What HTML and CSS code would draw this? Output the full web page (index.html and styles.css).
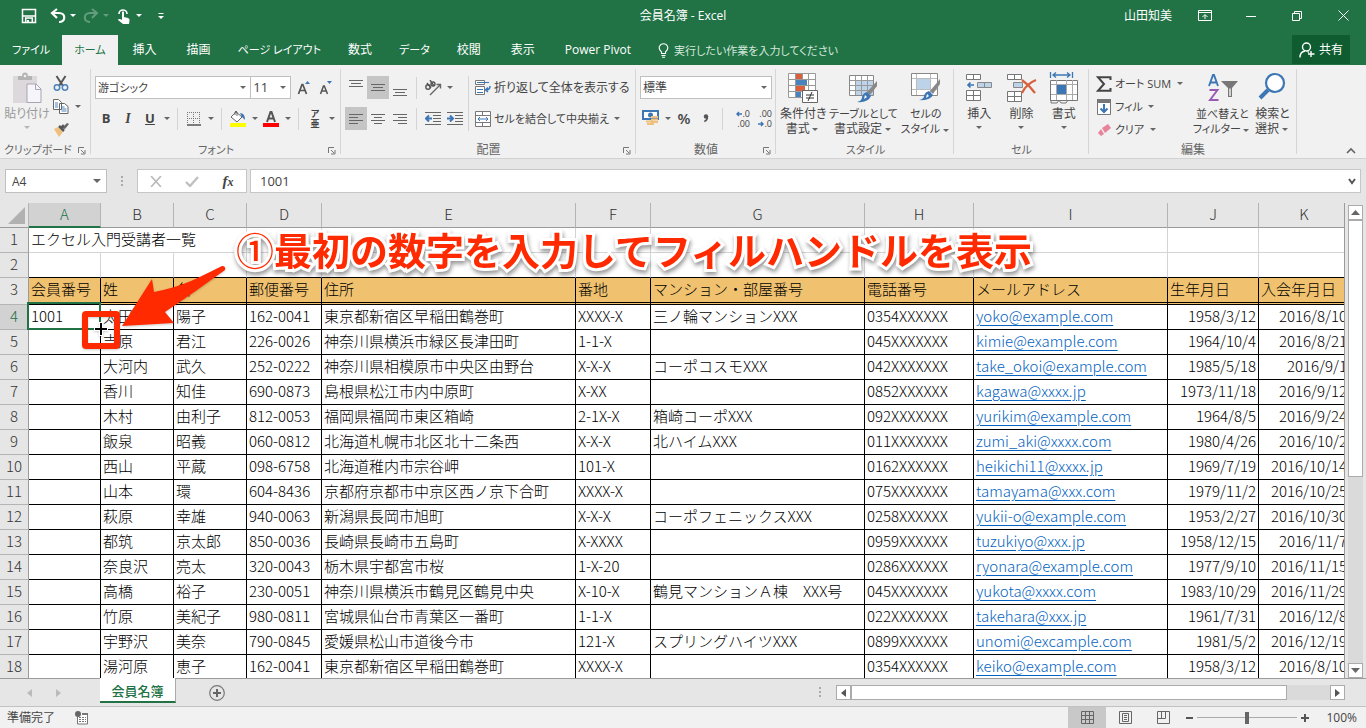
FILE: index.html
```html
<!DOCTYPE html>
<html lang="ja">
  <head>
    <meta charset="UTF-8" />
    <meta name="viewport" content="width=device-width, initial-scale=1.0" />
    <title>会員名簿 - Excel</title>
    <link rel="stylesheet" href="styles.css">
  </head>
  <body>
    <header class="titlebar">
      <div class="quick-access">
        <button class="qa" aria-label="上書き保存"><svg width="16" height="16" viewBox="0 0 16 16"><path d="M1.500 1.500h13v13h-13z" fill="none" stroke="#fff" stroke-width="1.500"/><path d="M2 8h12M4.700 14v-4h6.600v4" fill="none" stroke="#fff" stroke-width="1.500"/><path d="M6 12h2v3H6z" fill="#fff"/></svg></button>
        <button class="qa" aria-label="元に戻す"><svg width="16" height="16" viewBox="0 0 16 16"><path d="M2 5h7c7 0 7 9 0 9M7 1L2 5l5 5" fill="none" stroke="#fff" stroke-width="2.200"/></svg></button>
        <i class="caret light"></i>
        <button class="qa faded" aria-label="やり直し"><svg width="16" height="16" viewBox="0 0 16 16"><path d="M14 5H7c-7 0-7 9 0 9M9 1l5 4-5 5" fill="none" stroke="#fff" stroke-width="2"/></svg></button>
        <i class="caret light faded"></i>
        <button class="qa" aria-label="タッチ/マウス モード"><svg width="16" height="18" viewBox="0 0 16 18"><path d="M3 7a4 4 0 1 1 8 0" fill="none" stroke="#fff" stroke-width="1.600"/><path d="M6 5q1-1.500 2 0v5l4 1q2 .5 1.500 2.500L13 17H7l-5-4q0-1.500 2-1l2 1z" fill="#fff"/></svg></button>
        <i class="caret light"></i>
        <button class="qa" aria-label="クイック アクセスのカスタマイズ"><svg width="8" height="8" viewBox="0 0 8 8"><path d="M1.500 1.500h5" stroke="#fff"/><path d="M1 4h6L4 7z" fill="#fff"/></svg></button>
      </div>
      <h1>会員名簿 - Excel</h1>
      <div class="window-controls">
        <span>山田知美</span>
        <button aria-label="リボンの表示オプション"><svg width="14" height="12" viewBox="0 0 14 12"><path d="M.5.500h13v10H.5zM.5 2.500h13M7 9V5M4.500 7L7 4.500 9.500 7" fill="none" stroke="#fff"/></svg></button>
        <button aria-label="最小化"><svg width="10" height="10" viewBox="0 0 10 10"><path d="M0 5.500h10" stroke="#fff"/></svg></button>
        <button aria-label="元に戻す (縮小)"><svg width="10" height="10" viewBox="0 0 10 10"><path d="M.5 2.500h7v7h-7zM2.500 2.500v-2h7v7h-2" fill="none" stroke="#fff"/></svg></button>
        <button aria-label="閉じる"><svg width="11" height="11" viewBox="0 0 11 11"><path d="M.5.500l10 10M10.500.5l-10 10" stroke="#fff"/></svg></button>
      </div>
    </header>

    <nav class="tabs">
      <a href="#file" class="kana">ファイル</a>
      <a href="#home" class="kana active">ホーム</a>
      <a href="#insert">挿入</a>
      <a href="#draw">描画</a>
      <a href="#layout" class="kana">ページ レイアウト</a>
      <a href="#formulas">数式</a>
      <a href="#data" class="kana">データ</a>
      <a href="#review">校閲</a>
      <a href="#view">表示</a>
      <a href="#pivot">Power Pivot</a>
      <a href="#tell" class="kana tell-me"><svg width="11" height="15" viewBox="0 0 11 15"><path d="M3.500 10.500V9C-1 5 2 .7 5.500.7S12 5 7.500 9v1.500zM3.500 12.500h4M4 14.300h3" fill="none" stroke="#fff" stroke-width="1.100"/></svg>実行したい作業を入力してください</a>
      <button class="share"><svg width="16" height="16" viewBox="0 0 16 16"><circle cx="7.500" cy="5" r="4" fill="none" stroke="#fff" stroke-width="1.400"/><path d="M1 15.500c0-4 2-6 5-6.500M8.500 9.500l1.500.8M12 9v6M9 12h6.500" fill="none" stroke="#fff" stroke-width="1.400"/></svg>共有</button>
    </nav>

    <section class="ribbon">
      <div class="group clipboard">
        <div class="group-body">
          <button class="big paste">
            <svg width="30" height="32" viewBox="0 0 30 32"><path d="M1 4h24v27H1z" fill="#dcd8dc"/><path d="M6 4h4q0-3.500 3-3.500T16 4h4v4H6z" fill="#b4b4b4"/><circle cx="13" cy="4" r="1.300" fill="#f1f1f1"/><path d="M15 12h9l5 5v13.500H15z" fill="#f6f6fa" stroke="#aaa4b4"/><path d="M23.500 12v5.500H29" fill="none" stroke="#aaa4b4"/></svg>
            <span>貼り付け</span><i class="caret"></i>
          </button>
          <div class="stack">
            <button class="tool" aria-label="切り取り"><svg width="16" height="17" viewBox="0 0 16 17"><path d="M3.500 1l6.500 10M12.500 1L6 11" stroke="#555" stroke-width="2"/><circle cx="4" cy="12.500" r="2.700" fill="none" stroke="#4a82bd" stroke-width="1.500"/><circle cx="12" cy="12.500" r="2.700" fill="none" stroke="#4a82bd" stroke-width="1.500"/></svg></button>
            <div class="row"><button class="tool" aria-label="コピー"><svg width="16" height="15" viewBox="0 0 16 15"><path d="M.5.500h5l3 3V10.500h-8zM6.500 4.500h5l3.500 3v7H6.500z" fill="#fff" stroke="#666"/><path d="M2 4h3M2 6h3M2 8h3M8.500 8h3M8.500 10h5M8.500 12h5" stroke="#4a82bd"/></svg></button><i class="caret"></i></div>
            <button class="tool" aria-label="書式のコピー"><svg width="17" height="15" viewBox="0 0 17 15"><path d="M1 7l4-2 5 5-4 5z" fill="#eec07c"/><path d="M6 4l5 5M8 6l2-2 2 2" stroke="#555" stroke-width="2.500"/><path d="M10 5l4-4 2 1-4 5z" fill="#666"/></svg></button>
          </div>
        </div>
        <div class="group-label kana">クリップボード<svg class="launcher" width="8" height="8" viewBox="0 0 8 8"><path d="M.5 6V.5H6M3 3l3 3M7 3v4H3" fill="none" stroke="#777"/></svg></div>
      </div>

      <div class="group font">
        <div class="group-body column">
          <div class="row">
            <label class="combo font-name kana"><select aria-label="フォント"><option>游ゴシック</option></select></label>
            <label class="combo font-size"><select aria-label="フォント サイズ"><option>11</option></select></label>
            <button class="tool" aria-label="フォント サイズの拡大"><svg width="14" height="16" viewBox="0 0 14 16"><path d="M1.500 14L5 4.500h.8L9.500 14M3 10.500h5" fill="none" stroke="#555" stroke-width="1.700"/><path d="M8 4l2.500-3L13 4z" fill="#3c76b5"/></svg></button>
            <button class="tool" aria-label="フォント サイズの縮小"><svg width="14" height="16" viewBox="0 0 14 16"><path d="M1.500 14L4.500 6h.8L8.500 14M3 11h4.500" fill="none" stroke="#555" stroke-width="1.500"/><path d="M8 1h5l-2.500 3z" fill="#3c76b5"/></svg></button>
          </div>
          <div class="row">
            <button class="tool"><b>B</b></button>
            <button class="tool"><em>I</em></button>
            <button class="tool"><u>U</u></button><i class="caret"></i>
            <span class="sep"></span>
            <button class="tool" aria-label="罫線"><svg width="14" height="14" viewBox="0 0 14 14"><path d="M0 .5h14M0 6.500h14M.5 0v12M6.500 0v12M12.500 0v12" stroke="#777" stroke-dasharray="1 1"/><path d="M0 13h14" stroke="#555" stroke-width="1.500"/></svg></button><i class="caret"></i>
            <span class="sep"></span>
            <button class="tool" aria-label="塗りつぶしの色"><svg width="18" height="17" viewBox="0 0 18 17"><path d="M2 7l5-5 6 5-5 5z" fill="#fff" stroke="#666"/><path d="M6 5V2q1-2 2 0v4" fill="none" stroke="#666"/><path d="M11 3q5 0 5 7l-3-3z" fill="#3c76b5"/><path d="M1 13h16v4H1z" fill="#ff0"/></svg></button><i class="caret"></i>
            <button class="tool" aria-label="フォントの色"><svg width="16" height="17" viewBox="0 0 16 17"><path d="M4 12L7.500 2h1L12 12M5.500 8.500h5" fill="none" stroke="#555" stroke-width="2"/><path d="M0 13h16v4H0z" fill="#f00"/></svg></button><i class="caret"></i>
            <span class="sep"></span>
            <button class="tool ruby" aria-label="ふりがな"><span>ア</span><span>亜</span></button><i class="caret"></i>
          </div>
        </div>
        <div class="group-label kana">フォント<svg class="launcher" width="8" height="8" viewBox="0 0 8 8"><path d="M.5 6V.5H6M3 3l3 3M7 3v4H3" fill="none" stroke="#777"/></svg></div>
      </div>

      <div class="group align">
        <div class="group-body">
          <div class="stack wide">
            <div class="row">
              <button class="tool" aria-label="上揃え"><svg width="14" height="16" viewBox="0 0 14 16"><path d="M0 .5h14M2 3.500h10M0 6.500h14" stroke="#666"/></svg></button>
              <button class="tool on" aria-label="上下中央揃え"><svg width="14" height="16" viewBox="0 0 14 16"><path d="M0 4.500h14M2 7.500h10M0 10.500h14" stroke="#666"/></svg></button>
              <button class="tool" aria-label="下揃え"><svg width="14" height="16" viewBox="0 0 14 16"><path d="M0 9.500h14M2 12.500h10M0 15.500h14" stroke="#666"/></svg></button>
              <span class="sep"></span>
              <button class="tool" aria-label="方向"><svg width="18" height="16" viewBox="0 0 18 16"><path d="M6 15L16 5M12.500 4.500H16.500V8.500" fill="none" stroke="#666" stroke-width="1.400"/><circle cx="4" cy="7" r="2.200" fill="none" stroke="#555" stroke-width="1.400"/><path d="M3 3l4 5" stroke="#555" stroke-width="1.400"/><circle cx="9" cy="4" r="2" fill="none" stroke="#555" stroke-width="1.400"/><path d="M6 0l4 6" stroke="#555" stroke-width="1.400"/></svg></button><i class="caret"></i>
            </div>
            <div class="row">
              <button class="tool on" aria-label="左揃え"><svg width="14" height="12" viewBox="0 0 14 12"><path d="M0 1.500h14M0 4.500h9M0 7.500h14M0 10.500h9" stroke="#666"/></svg></button>
              <button class="tool" aria-label="中央揃え"><svg width="14" height="12" viewBox="0 0 14 12"><path d="M0 1.500h14M3 4.500h8M0 7.500h14M3 10.500h8" stroke="#666"/></svg></button>
              <button class="tool" aria-label="右揃え"><svg width="14" height="12" viewBox="0 0 14 12"><path d="M0 1.500h14M5 4.500h9M0 7.500h14M5 10.500h9" stroke="#666"/></svg></button>
              <span class="sep"></span>
              <button class="tool" aria-label="インデントを減らす"><svg width="16" height="14" viewBox="0 0 16 14"><path d="M0 .5h16M8 3.500h8M8 6.500h8M8 9.500h8M0 12.500h16" stroke="#666"/><path d="M7 6.500H2M4 3.500l-3 3 3 3" fill="none" stroke="#3c76b5" stroke-width="2"/></svg></button>
              <button class="tool" aria-label="インデントを増やす"><svg width="16" height="14" viewBox="0 0 16 14"><path d="M0 .5h16M8 3.500h8M8 6.500h8M8 9.500h8M0 12.500h16" stroke="#666"/><path d="M0 6.500h5M3 3.500l3 3-3 3" fill="none" stroke="#3c76b5" stroke-width="2"/></svg></button>
            </div>
          </div>
          <span class="sep tall"></span>
          <div class="stack wide">
            <button class="text-tool"><svg width="16" height="16" viewBox="0 0 16 16"><path d="M.5.500h9v4h-9zM.5 6.500h9v8h-9z" fill="#fff" stroke="#777"/><path d="M2 2.500h12M2 9.500h6M2 12.500h6" stroke="#3c76b5"/><path d="M15 6q0 4-4 4M13 7.500L10.500 10l2.500 2" fill="none" stroke="#3c76b5" stroke-width="1.500"/></svg>折り返して全体を表示する</button>
            <button class="text-tool kana"><svg width="16" height="16" viewBox="0 0 16 16"><path d="M.5.500h15v15H.5zM.5 4.500h15M.5 11.500h15M7.500.5v4M7.500 11.500v4" fill="#fff" stroke="#777"/><path d="M3 8h10M5 6L3 8l2 2M11 6l2 2-2 2" fill="none" stroke="#3c76b5"/></svg>セルを結合して中央揃え<i class="caret"></i></button>
          </div>
        </div>
        <div class="group-label">配置<svg class="launcher" width="8" height="8" viewBox="0 0 8 8"><path d="M.5 6V.5H6M3 3l3 3M7 3v4H3" fill="none" stroke="#777"/></svg></div>
      </div>

      <div class="group number">
        <div class="group-body column">
          <label class="combo"><select aria-label="数値の書式"><option>標準</option></select></label>
          <div class="row">
            <button class="tool" aria-label="通貨表示形式"><svg width="18" height="17" viewBox="0 0 18 17"><path d="M1 1h15v8H1z" fill="#fff" stroke="#3c76b5" stroke-width="2"/><circle cx="8.500" cy="5" r="2.500" fill="#3c76b5"/><path d="M9 7h7M9 9.500h7M9 12h7M4 11.500h7M5 14h7" stroke="#eec07c" stroke-width="2"/></svg></button><i class="caret"></i>
            <button class="tool percent">%</button>
            <button class="tool" aria-label="桁区切りスタイル"><svg width="6" height="10" viewBox="0 0 6 10"><circle cx="3" cy="2.500" r="2.200" fill="#555"/><path d="M4.300 2.500q.4 3.500-3 5" fill="none" stroke="#555" stroke-width="1.600"/></svg></button>
            <span class="sep"></span>
            <button class="tool decimals"><span><svg width="6" height="6" viewBox="0 0 6 6"><path d="M6 3H1M3 1L1 3l2 2" fill="none" stroke="#3c76b5" stroke-width="1.500"/></svg>.0</span><span>.00</span></button>
            <button class="tool decimals"><span>.00</span><span><svg width="6" height="6" viewBox="0 0 6 6"><path d="M0 3h5M3 1l2 2-2 2" fill="none" stroke="#3c76b5" stroke-width="1.500"/></svg>.0</span></button>
          </div>
        </div>
        <div class="group-label">数値<svg class="launcher" width="8" height="8" viewBox="0 0 8 8"><path d="M.5 6V.5H6M3 3l3 3M7 3v4H3" fill="none" stroke="#777"/></svg></div>
      </div>

      <div class="group styles">
        <div class="group-body">
          <button class="big">
            <svg width="32" height="32" viewBox="0 0 32 32"><path d="M1.500 1.500h27v24h-27zM1.500 7.500h27M1.500 13.500h27M1.500 19.500h27M8.500 1.500v24M15.500 1.500v24M21.500 1.500v24" fill="#fff" stroke="#999"/><path d="M9 2h6v5H9zM9 14h9v5H9z" fill="#d8603c"/><path d="M9 8h11v5H9zM9 20h5v5H9z" fill="#4a82bd"/><path d="M15.500 18.500h15v12h-15z" fill="#fff" stroke="#666"/><path d="M19 23h8M19 26h8M25 20l-4 9" stroke="#333"/></svg>
            <span>条件付き</span><span>書式<i class="caret"></i></span>
          </button>
          <button class="big">
            <svg width="32" height="32" viewBox="0 0 32 32"><path d="M1.500 3.500h24v20h-24z" fill="#fff" stroke="#888"/><path d="M8 9h17v14H8z" fill="#bdd3ea"/><path d="M2 8.500h23M2 13.500h23M2 18.500h23M7.500 4v19M13.500 4v19M19.500 4v19" stroke="#999"/><path d="M29 9v5l-7 9-3-3z" fill="#888"/><path d="M19 20l4 4q-3 7-14 6 5-1 5-5 1-4 5-5z" fill="#3c76b5"/><path d="M17 23l2 2-3 2z" fill="#fff"/></svg>
            <span class="kana">テーブルとして</span><span>書式設定<i class="caret"></i></span>
          </button>
          <button class="big">
            <svg width="32" height="32" viewBox="0 0 32 32"><path d="M1.500 1.500h26v22h-26z" fill="#fff" stroke="#888"/><path d="M2 6.500h25M2 17.500h25M6.500 2v21M20.500 2v21" stroke="#bbb"/><path d="M7 7h13v10H7z" fill="#bdd3ea"/><path d="M30 7v5l-7 10-3-3z" fill="#888"/><path d="M19 19l4 4q-3 6-14 5 5-1 5-4 1-4 5-5z" fill="#3c76b5"/><path d="M17 22l2 2-3 2z" fill="#fff"/></svg>
            <span class="kana">セルの</span><span class="kana">スタイル<i class="caret"></i></span>
          </button>
        </div>
        <div class="group-label kana">スタイル</div>
      </div>

      <div class="group cells">
        <div class="group-body">
          <button class="big">
            <svg width="28" height="32" viewBox="0 0 28 32"><path d="M1.500 2.500h14v5h-14zM8.500 2.500v5M1.500 18.500h14v10h-14zM8.500 18.500v10M1.500 23.500h14" fill="#fff" stroke="#777"/><path d="M12.500 10.500h14v5h-14zM19.500 10.500v5" fill="#bdd3ea" stroke="#888"/><path d="M9 13H3M5.500 10.500L3 13l2.500 2.500" fill="none" stroke="#3c76b5" stroke-width="1.700"/></svg>
            <span>挿入</span><i class="caret"></i>
          </button>
          <button class="big">
            <svg width="32" height="32" viewBox="0 0 32 32"><path d="M2.500 2.500h14v5h-14zM9.500 2.500v5M2.500 19.500h14v10h-14zM9.500 19.500v10M2.500 24.500h14" fill="#fff" stroke="#777"/><path d="M8.500 10.500h9v5h-9z" fill="#bdd3ea" stroke="#888"/><path d="M17 8q7 5 13 13M31 8Q21 12 17 21" fill="none" stroke="#d8603c" stroke-width="2.200"/></svg>
            <span>削除</span><i class="caret"></i>
          </button>
          <button class="big">
            <svg width="30" height="32" viewBox="0 0 30 32"><path d="M1.500 8.500h27v20h-27z" fill="#fff" stroke="#777"/><path d="M2 12.500h26M2 22.500h26M7.500 8v20M17.500 8v20M23.500 8v20" stroke="#aaa"/><path d="M8 13h9v9H8z" fill="#3c76b5"/><path d="M1.500 0v6M23.500 0v6M4 3h17M7 .5L4 3l3 2.500M18 .5L21 3l-3 2.500" fill="none" stroke="#3c76b5" stroke-width="1.300"/><path d="M2 28v3h6l2-3 2 3h5l2-3" fill="none" stroke="#777"/></svg>
            <span>書式</span><i class="caret"></i>
          </button>
        </div>
        <div class="group-label kana">セル</div>
      </div>

      <div class="group editing">
        <div class="group-body">
          <div class="stack edit-list kana">
            <button class="text-tool"><svg width="16" height="16" viewBox="0 0 16 16"><path d="M14.500 4V1.200H2L8 8l-6 6.800h12.500V12" fill="none" stroke="#444" stroke-width="2"/></svg>オート SUM<i class="caret"></i></button>
            <button class="text-tool"><svg width="16" height="16" viewBox="0 0 16 16"><path d="M1.500.5h13v15h-13z" fill="#fff" stroke="#777"/><path d="M1 0h14v4H1z" fill="#777"/><path d="M8 5v8M4.500 9.500L8 13l3.500-3.500" fill="none" stroke="#3c76b5" stroke-width="2"/></svg>フィル<i class="caret"></i></button>
            <button class="text-tool"><svg width="16" height="16" viewBox="0 0 16 16"><path d="M6 6l6-4 3 4-6 5z" fill="#e8839a"/><path d="M5 7l3 5-3 2-3-3z" fill="#e8839a"/></svg>クリア<i class="caret"></i></button>
          </div>
          <button class="big kana">
            <svg width="32" height="32" viewBox="0 0 32 32"><path d="M3 14L7 3h1l4 11M5 10.500h5" fill="none" stroke="#3c76b5" stroke-width="1.900"/><path d="M3.500 18h8L4 28h8.500" fill="none" stroke="#9859b5" stroke-width="1.900"/><path d="M15 9h17l-6 7v9h-4v-9z" fill="#777"/><path d="M24 16.500V24" stroke="#f1f1f1" stroke-width="1.500"/></svg>
            <span>並べ替えと</span><span>フィルター<i class="caret"></i></span>
          </button>
          <button class="big">
            <svg width="30" height="32" viewBox="0 0 30 32"><circle cx="18" cy="11" r="9" fill="#fff" stroke="#3c76b5" stroke-width="2.200"/><path d="M11 18l-8 8" stroke="#3c76b5" stroke-width="4"/></svg>
            <span>検索と</span><span>選択<i class="caret"></i></span>
          </button>
        </div>
        <div class="group-label">編集</div>
      </div>
      <button class="collapse" aria-label="リボンを折りたたむ"><svg width="10" height="7" viewBox="0 0 10 7"><path d="M1 6l4-4 4 4" fill="none" stroke="#666" stroke-width="1.700"/></svg></button>
    </section>

    <section class="formula-bar">
      <label class="combo name-box"><input type="text" value="A4" aria-label="名前ボックス" /></label>
      <span class="dots"></span>
      <div class="fx">
        <button aria-label="キャンセル"><svg width="12" height="11" viewBox="0 0 12 11"><path d="M1 0l10 11M11 0L1 11" stroke="#bbb" stroke-width="1.700"/></svg></button>
        <button aria-label="入力"><svg width="14" height="11" viewBox="0 0 14 11"><path d="M1 6l4 4 8-9" fill="none" stroke="#c0c0c0" stroke-width="2.400"/></svg></button>
        <button class="fx-button"><em>f<small>x</small></em></button>
      </div>
      <div class="formula">
        <input type="text" value="1001" aria-label="数式バー" />
        <svg width="8" height="7" viewBox="0 0 8 7"><path d="M1 1l3 4 3-4" fill="none" stroke="#555" stroke-width="2"/></svg>
      </div>
    </section>

    <main class="sheet">
      <div class="grid">
        <table>
          <colgroup><col class="w-head"><col class="w-number"><col class="w-name"><col class="w-name"><col class="w-zip"><col class="w-address"><col class="w-zip"><col class="w-building"><col class="w-phone"><col class="w-mail"><col class="w-date"><col class="w-date"></colgroup>
          <thead>
            <tr><th class="corner"><svg width="17" height="17" viewBox="0 0 17 17"><path d="M17 0v17H0z" fill="#b1b1b1"/></svg></th><th class="selected">A</th><th>B</th><th>C</th><th>D</th><th>E</th><th>F</th><th>G</th><th>H</th><th>I</th><th>J</th><th>K</th></tr>
          </thead>
          <tbody>
            <tr class="blank"><th>1</th><td colspan="3">エクセル入門受講者一覧</td><td></td><td></td><td></td><td></td><td></td><td></td><td></td><td></td></tr>
            <tr class="blank last"><th>2</th><td></td><td></td><td></td><td></td><td></td><td></td><td></td><td></td><td></td><td></td><td></td></tr>
            <tr class="heading"><th>3</th><td>会員番号</td><td>姓</td><td>名</td><td>郵便番号</td><td>住所</td><td>番地</td><td>マンション・部屋番号</td><td>電話番号</td><td>メールアドレス</td><td>生年月日</td><td>入会年月日</td></tr>
            <tr><th class="selected">4</th><td class="active-cell">1001</td><td>太田川</td><td>陽子</td><td>162-0041</td><td>東京都新宿区早稲田鶴巻町</td><td>XXXX-X</td><td>三ノ輪マンションXXX</td><td>0354XXXXXX</td><td><a href="mailto:yoko@example.com">yoko@example.com</a></td><td class="date">1958/3/12</td><td class="date">2016/8/10</td></tr>
            <tr><th>5</th><td></td><td>吉原</td><td>君江</td><td>226-0026</td><td>神奈川県横浜市緑区長津田町</td><td>1-1-X</td><td></td><td>045XXXXXXX</td><td><a href="mailto:kimie@example.com">kimie@example.com</a></td><td class="date">1964/10/4</td><td class="date">2016/8/21</td></tr>
            <tr><th>6</th><td></td><td>大河内</td><td>武久</td><td>252-0222</td><td>神奈川県相模原市中央区由野台</td><td>X-X-X</td><td>コーポコスモXXX</td><td>042XXXXXXX</td><td><a href="mailto:take_okoi@example.com">take_okoi@example.com</a></td><td class="date">1985/5/18</td><td class="date">2016/9/1</td></tr>
            <tr><th>7</th><td></td><td>香川</td><td>知佳</td><td>690-0873</td><td>島根県松江市内中原町</td><td>X-XX</td><td></td><td>0852XXXXXX</td><td><a href="mailto:kagawa@xxxx.jp">kagawa@xxxx.jp</a></td><td class="date">1973/11/18</td><td class="date">2016/9/12</td></tr>
            <tr><th>8</th><td></td><td>木村</td><td>由利子</td><td>812-0053</td><td>福岡県福岡市東区箱崎</td><td>2-1X-X</td><td>箱崎コーポXXX</td><td>092XXXXXXX</td><td><a href="mailto:yurikim@example.com">yurikim@example.com</a></td><td class="date">1964/8/5</td><td class="date">2016/9/24</td></tr>
            <tr><th>9</th><td></td><td>飯泉</td><td>昭義</td><td>060-0812</td><td>北海道札幌市北区北十二条西</td><td>X-X-X</td><td>北ハイムXXX</td><td>011XXXXXXX</td><td><a href="mailto:zumi_aki@xxxx.com">zumi_aki@xxxx.com</a></td><td class="date">1980/4/26</td><td class="date">2016/10/2</td></tr>
            <tr><th>10</th><td></td><td>西山</td><td>平蔵</td><td>098-6758</td><td>北海道稚内市宗谷岬</td><td>101-X</td><td></td><td>0162XXXXXX</td><td><a href="mailto:heikichi11@xxxx.jp">heikichi11@xxxx.jp</a></td><td class="date">1969/7/19</td><td class="date">2016/10/14</td></tr>
            <tr><th>11</th><td></td><td>山本</td><td>環</td><td>604-8436</td><td>京都府京都市中京区西ノ京下合町</td><td>XXXX-X</td><td></td><td>075XXXXXXX</td><td><a href="mailto:tamayama@xxx.com">tamayama@xxx.com</a></td><td class="date">1979/11/2</td><td class="date">2016/10/25</td></tr>
            <tr><th>12</th><td></td><td>萩原</td><td>幸雄</td><td>940-0063</td><td>新潟県長岡市旭町</td><td>X-X-X</td><td>コーポフェニックスXXX</td><td>0258XXXXXX</td><td><a href="mailto:yukii-o@example.com">yukii-o@example.com</a></td><td class="date">1953/2/27</td><td class="date">2016/10/30</td></tr>
            <tr><th>13</th><td></td><td>都筑</td><td>京太郎</td><td>850-0036</td><td>長崎県長崎市五島町</td><td>X-XXXX</td><td></td><td>0959XXXXXX</td><td><a href="mailto:tuzukiyo@xxx.jp">tuzukiyo@xxx.jp</a></td><td class="date">1958/12/15</td><td class="date">2016/11/7</td></tr>
            <tr><th>14</th><td></td><td>奈良沢</td><td>亮太</td><td>320-0043</td><td>栃木県宇都宮市桜</td><td>1-X-20</td><td></td><td>0286XXXXXX</td><td><a href="mailto:ryonara@example.com">ryonara@example.com</a></td><td class="date">1977/9/10</td><td class="date">2016/11/15</td></tr>
            <tr><th>15</th><td></td><td>高橋</td><td>裕子</td><td>230-0051</td><td>神奈川県横浜市鶴見区鶴見中央</td><td>X-10-X</td><td>鶴見マンションＡ棟　XXX号</td><td>045XXXXXXX</td><td><a href="mailto:yukota@xxxx.com">yukota@xxxx.com</a></td><td class="date">1983/10/29</td><td class="date">2016/11/29</td></tr>
            <tr><th>16</th><td></td><td>竹原</td><td>美紀子</td><td>980-0811</td><td>宮城県仙台市青葉区一番町</td><td>1-1-X</td><td></td><td>022XXXXXXX</td><td><a href="mailto:takehara@xxx.jp">takehara@xxx.jp</a></td><td class="date">1961/7/31</td><td class="date">2016/12/8</td></tr>
            <tr><th>17</th><td></td><td>宇野沢</td><td>美奈</td><td>790-0845</td><td>愛媛県松山市道後今市</td><td>121-X</td><td>スプリングハイツXXX</td><td>0899XXXXXX</td><td><a href="mailto:unomi@excample.com">unomi@excample.com</a></td><td class="date">1981/5/2</td><td class="date">2016/12/19</td></tr>
            <tr><th>18</th><td></td><td>湯河原</td><td>恵子</td><td>162-0041</td><td>東京都新宿区早稲田鶴巻町</td><td>XXXX-X</td><td></td><td>0354XXXXXX</td><td><a href="mailto:keiko@example.com">keiko@example.com</a></td><td class="date">1958/3/12</td><td class="date">2016/8/10</td></tr>
          </tbody>
        </table>
      </div>
      <div class="vscroll">
        <button aria-label="上へスクロール"><svg width="9" height="5" viewBox="0 0 9 5"><path d="M0 5l4.500-5L9 5z" fill="#666"/></svg></button>
        <div class="track"><div class="thumb"></div></div>
        <button aria-label="下へスクロール"><svg width="9" height="5" viewBox="0 0 9 5"><path d="M0 0h9L4.500 5z" fill="#666"/></svg></button>
      </div>

      <!-- callout over the cells -->
      <svg class="pointer" width="150" height="90" viewBox="0 0 150 90">
        <path d="M145 7q4 0 3 4-30 22-60 42l9 11L45 67 75 20l2 13C105 28 125 17 145 7z" fill="#ff2a00"/>
        <rect x="8" y="55" width="32" height="32" rx="1" fill="none" stroke="#ff2a00" stroke-width="6" stroke-linejoin="round"/>
        <path d="M24 63v14M17 70h14" stroke="#fff" stroke-width="4"/>
        <path d="M24 64v12M18 70h12" stroke="#000" stroke-width="2"/>
      </svg>
      <p class="callout"><span>①</span>最初の数字を入力してフィルハンドルを表示</p>
    </main>

    <div class="sheet-bar">
      <div class="sheet-nav">
        <button aria-label="前のシート"><svg width="5" height="8" viewBox="0 0 5 8"><path d="M5 0v8L0 4z" fill="#bbb"/></svg></button>
        <button aria-label="次のシート"><svg width="5" height="8" viewBox="0 0 5 8"><path d="M0 0v8l5-4z" fill="#bbb"/></svg></button>
      </div>
      <a href="#sheet1" class="sheet-tab">会員名簿</a>
      <button class="add-sheet" aria-label="新しいシート"><svg width="16" height="16" viewBox="0 0 16 16"><circle cx="8" cy="8" r="7.300" fill="none" stroke="#777" stroke-width="1.200"/><path d="M8 4v8M4 8h8" stroke="#666" stroke-width="2"/></svg></button>
      <span class="dots"></span>
      <div class="hscroll">
        <button aria-label="左へスクロール"><svg width="5" height="8" viewBox="0 0 5 8"><path d="M5 0v8L0 4z" fill="#555"/></svg></button>
        <div class="track"><div class="thumb"></div></div>
        <button aria-label="右へスクロール"><svg width="5" height="8" viewBox="0 0 5 8"><path d="M0 0v8l5-4z" fill="#555"/></svg></button>
      </div>
    </div>

    <footer class="status-bar">
      <span>準備完了</span>
      <svg width="14" height="14" viewBox="0 0 14 14"><path d="M2.500 4v9h10V3.500h-5" fill="#fff" stroke="#777"/><circle cx="3" cy="3" r="3" fill="#666"/><path d="M7 2h6v2H7z" fill="#777"/><path d="M4 6.500h7M4 8.500h7M4 10.500h7" stroke="#777" stroke-dasharray="2 1"/></svg>
      <div class="views">
        <button class="on" aria-label="標準"><svg width="13" height="13" viewBox="0 0 13 13"><path d="M.5.500h12v12H.5zM.5 4.500h12M.5 8.500h12M4.500.5v12M8.500.5v12" fill="none" stroke="#666"/></svg></button>
        <button aria-label="ページ レイアウト"><svg width="13" height="13" viewBox="0 0 13 13"><path d="M.5.500h12v12H.5zM3.500 2.500h6v8h-6zM5 4.500h3M5 6.500h3M5 8.500h3" fill="none" stroke="#666"/></svg></button>
        <button aria-label="改ページ プレビュー"><svg width="13" height="13" viewBox="0 0 13 13"><path d="M.5.500h12v12H.5zM4.500.5v7M8.500.5v7H.5" fill="none" stroke="#666"/></svg></button>
      </div>
      <button class="zoom-step" aria-label="縮小"><svg width="7" height="8" viewBox="0 0 7 8"><path d="M0 4h7" stroke="#555" stroke-width="2"/></svg></button>
      <input type="range" min="0" max="100" value="50" aria-label="ズーム" />
      <button class="zoom-step" aria-label="拡大"><svg width="8" height="8" viewBox="0 0 8 8"><path d="M0 4h8M4 0v8" stroke="#555" stroke-width="2"/></svg></button>
      <span class="zoom-value">100%</span>
    </footer>
  </body>
</html>
```
FILE: styles.css
```css
* {
  box-sizing: border-box;
}
body {
  margin: 0;
  height: 100vh;
  display: flex;
  flex-direction: column;
  overflow: hidden;
  background: #e6e6e6;
  color: #444;
  font: 12px/15px "Open Sans", "Noto Sans CJK JP", sans-serif;
  font-feature-settings: "palt";
}
button,
select,
input {
  font: inherit;
  font-feature-settings: inherit;
  color: inherit;
  margin: 0;
  padding: 0;
  border: 0;
  background: none;
  border-radius: 0;
}
a {
  color: inherit;
  text-decoration: none;
}
svg {
  display: block;
  flex: none;
}
.kana {
  font-size: 11px;
}

/* Title bar */
.titlebar {
  flex: 0 0 35px;
  display: grid;
  grid-template-columns: 1fr auto 1fr;
  align-items: center;
  padding-bottom: 4px;
  background: #217346;
  color: #fff;
}
.titlebar h1 {
  margin: 0;
  font-size: 12px;
  font-weight: 400;
}
.quick-access {
  display: flex;
  align-items: center;
  padding-left: 17px;
}
.qa {
  width: 24px;
  height: 24px;
  display: grid;
  place-items: center;
}
.quick-access .qa + .qa {
  margin-left: 5px;
}
.quick-access .caret {
  width: 9px;
  margin: 0 2px 0 -2px;
}
.quick-access .caret + .qa:last-child {
  margin-left: 4px;
}
.faded {
  opacity: 0.3;
}
.window-controls {
  display: flex;
  justify-content: flex-end;
  align-items: center;
}
.window-controls span {
  margin-right: 10px;
}
.window-controls button {
  width: 46px;
  height: 30px;
  display: grid;
  place-items: center;
}
.caret {
  flex: none;
  display: inline-grid;
  place-items: center;
  width: 11px;
  height: 8px;
  color: #666;
  vertical-align: middle;
}
.caret::before {
  content: "";
  border: 3px solid transparent;
  border-top-color: currentColor;
  border-bottom: 0;
}
.caret.light {
  color: #fff;
}

/* Ribbon tabs */
.tabs {
  flex: 0 0 30px;
  display: flex;
  background: #217346;
  color: #fff;
}
.tabs a {
  padding: 0 15px;
  line-height: 29px;
  white-space: nowrap;
}
.tabs a.kana {
  padding: 0 12px;
}
.tabs .active {
  background: #f1f1f1;
  color: #217346;
}
.tabs .tell-me {
  display: flex;
  align-items: center;
  gap: 5px;
  color: #d5e8dc;
}
.share {
  display: flex;
  align-items: center;
  gap: 4px;
  height: 29px;
  margin: 0 16px 0 auto;
  padding: 0 7px;
  background: #0e5c2f;
  color: #fff;
}

/* Ribbon */
.ribbon {
  flex: 0 0 94px;
  display: flex;
  padding: 4px 0;
  background: #f1f1f1;
  border-bottom: 1px solid #d2d2d2;
}
.group {
  display: flex;
  flex-direction: column;
  min-width: 0;
  border-right: 1px solid #d6d6d6;
  padding: 0 3px 0 4px;
}
.group-body {
  flex: 1;
  display: flex;
  padding-top: 7px;
}
.group-body.column {
  flex-direction: column;
  gap: 8px;
}
.group-label {
  position: relative;
  height: 10px;
  line-height: 12px;
  text-align: center;
  white-space: nowrap;
  color: #666;
}
.launcher {
  position: absolute;
  right: 1px;
  bottom: -1px;
}
.clipboard {
  flex: 0 0 91px;
}
.clipboard .group-label {
  text-align: left;
}
.font {
  flex: 0 0 250px;
}
.align {
  flex: 0 0 295px;
}
.number {
  flex: 0 0 140px;
}
.styles {
  flex: 0 0 178px;
}
.cells {
  flex: 0 0 135px;
}
.editing {
  flex: 0 0 208px;
}
.row {
  display: flex;
  align-items: center;
  height: 23px;
}
.stack {
  display: flex;
  flex-direction: column;
}
.stack.wide {
  gap: 8px;
}
.tool {
  flex: none;
  width: 22px;
  height: 23px;
  display: grid;
  place-items: center;
}
.tool.on {
  background: #c5c5c5;
}
.tool b,
.tool em,
.tool u {
  font-size: 13px;
  font-weight: 700;
}
.tool em {
  font-family: "Liberation Serif", serif;
  font-size: 14px;
}
.sep {
  flex: none;
  width: 1px;
  height: 22px;
  margin: 0 5px;
  background: #d4d4d4;
}
.sep.tall {
  height: 55px;
  margin: 0 6px 0 2px;
}
.combo {
  position: relative;
  display: block;
  height: 23px;
  background: #fff;
  border: 1px solid #c0c0c0;
}
.combo::after {
  content: "";
  position: absolute;
  right: 4px;
  top: 9px;
  border: 3px solid transparent;
  border-top-color: #666;
  border-bottom: 0;
}
.combo select,
.combo input {
  appearance: none;
  display: block;
  width: 100%;
  height: 100%;
  padding: 0 2px;
  outline: 0;
}
.font-name {
  width: 157px;
}
.font-size {
  width: 41px;
  margin-left: -1px;
  margin-right: 2px;
}
.font-size select {
  font-size: 13px;
}
.ruby {
  align-content: center;
  font-size: 9px;
  line-height: 10px;
  font-weight: 700;
}
.percent {
  font-size: 15px;
  font-weight: 600;
}
.decimals {
  align-content: center;
  justify-items: end;
  font-size: 9px;
  line-height: 10px;
}
.decimals span {
  display: flex;
  align-items: center;
}
.big {
  display: flex;
  flex-direction: column;
  align-items: center;
  white-space: nowrap;
}
.group-body:has(.big) {
  padding-top: 3px;
}
.big svg {
  margin-bottom: 2px;
}
.big .caret {
  margin-top: 2px;
}
.big span .caret {
  margin-top: 0;
}
.paste {
  width: 46px;
  color: #9a9a9a;
}
.paste .caret {
  color: #b5b5b5;
}
.text-tool {
  display: flex;
  align-items: center;
  height: 23px;
  gap: 3px;
  white-space: nowrap;
}
.styles {
  padding: 0 2px 0 4px;
}
.styles .group-body {
  justify-content: space-between;
}
.cells .big {
  flex: 1;
}
.edit-list {
  flex: 1;
  padding-left: 3px;
}
.editing .big {
  margin-left: 3px;
}
.editing .big:last-child {
  margin-right: 3px;
}
.collapse {
  align-self: flex-end;
  margin: 0 10px 0 auto;
}

/* Formula bar */
.formula-bar {
  flex: 0 0 44px;
  display: flex;
  align-items: flex-start;
  padding: 10px 5px 0;
}
.name-box {
  width: 102px;
  height: 24px;
}
.name-box input {
  padding: 0 6px;
}
.name-box::after {
  right: 5px;
  border-width: 4px;
  border-bottom: 0;
}
.dots {
  flex: none;
  width: 2px;
  height: 11px;
  background: repeating-linear-gradient(#aaa 0 2px, transparent 2px 4px);
}
.formula-bar .dots {
  margin: 7px 14px 0;
}
.fx,
.formula {
  height: 24px;
  display: flex;
  align-items: center;
  background: #fff;
  border: 1px solid #c6c6c6;
}
.fx {
  width: 110px;
}
.fx button {
  flex: 1;
  display: grid;
  place-items: center;
}
.fx-button {
  font: 700 15px/20px "Liberation Serif", serif;
}
.fx small {
  font-size: 12px;
}
.formula {
  flex: 1;
  margin-left: 3px;
  padding-right: 4px;
}
.formula input {
  flex: 1;
  padding: 0 9px;
  font-size: 13px;
  outline: 0;
}

/* Sheet */
.sheet {
  position: relative;
  flex: 1;
  min-height: 0;
  display: flex;
  padding-right: 3px;
  color: #000;
  font-family: "Noto Sans CJK JP", sans-serif;
  font-weight: 300;
  font-feature-settings: normal;
}
.grid {
  flex: 1;
  overflow: hidden;
  border-right: 1px solid #9b9b9b;
}
.grid table {
  width: 1350px;
  table-layout: fixed;
  border-collapse: separate;
  border-spacing: 0;
  font-size: 15px;
  line-height: 22px;
}
.w-head {
  width: 29px;
}
.w-number {
  width: 72px;
}
.w-name {
  width: 73px;
}
.w-zip {
  width: 75px;
}
.w-address {
  width: 254px;
}
.w-building {
  width: 214px;
}
.w-phone {
  width: 109px;
}
.w-mail {
  width: 194px;
}
.w-date {
  width: 91px;
}
.grid th,
.grid td {
  height: 25px;
  padding: 0 2px;
  vertical-align: top;
  white-space: nowrap;
  overflow: hidden;
  border-right: 1px solid #000;
  border-bottom: 1px solid #000;
}
.grid th {
  padding: 0;
  background: #e6e6e6;
  color: #333;
  font-weight: 300;
  border-color: #b4b4b4;
}
.grid thead th {
  border-bottom-color: #9b9b9b;
}
.grid tbody th {
  border-right-color: #9b9b9b;
}
.grid .corner svg {
  margin: 4px 0 0 8px;
}
.grid th.selected {
  background: #d2d2d2;
  color: #217346;
}
.grid thead th.selected {
  border-bottom: 2px solid #217346;
}
.grid td {
  background: #fff;
}
.grid .blank td {
  border-color: #d4d4d4;
}
.grid .last td {
  border-bottom-color: #000;
}
.grid .heading td {
  height: 27px;
  background: #f0c270;
  border-bottom: 3px double #000;
}
.grid td.date {
  text-align: right;
}
.grid td a {
  color: #0563c1;
  text-decoration: underline;
  text-underline-offset: 3px;
}
.grid td.active-cell {
  position: relative;
  overflow: visible;
}
.active-cell::after {
  content: "";
  position: absolute;
  inset: -3px -1px -1px -2px;
  border: 2px solid #217346;
}
.pointer {
  position: absolute;
  left: 77px;
  top: 56px;
  filter: drop-shadow(0 1px 1px rgba(0, 0, 0, 0.2));
}
.callout {
  position: absolute;
  left: 236px;
  top: 22px;
  margin: 0;
  font-size: 38px;
  line-height: 48px;
  font-weight: 700;
  white-space: nowrap;
  color: #ff2a00;
  -webkit-text-stroke: 6px #fff;
  paint-order: stroke fill;
  filter: drop-shadow(1px 3px 2px rgba(0, 0, 0, 0.4));
}
.callout span {
  font-weight: 500;
}

/* Scroll bars */
.vscroll {
  width: 15px;
  margin: 2px 0 0 3px;
  display: flex;
  flex-direction: column;
}
.vscroll button,
.hscroll button {
  width: 15px;
  height: 15px;
  display: grid;
  place-items: center;
  background: #fff;
  border: 1px solid #ababab;
}
.track {
  flex: 1;
  background: #dadada;
}
.thumb {
  background: #fff;
  border: 1px solid #ababab;
}
.vscroll .thumb {
  height: 58%;
}
.hscroll {
  flex: 0 0 509px;
  display: flex;
  height: 15px;
}
.hscroll .thumb {
  width: 91%;
  height: 15px;
}

/* Sheet tabs */
.sheet-bar {
  flex: 0 0 29px;
  display: flex;
  align-items: center;
  padding-right: 21px;
  border-top: 1px solid #9b9b9b;
  border-bottom: 1px solid #c2c2c2;
}
.sheet-nav {
  display: flex;
  gap: 24px;
  width: 100px;
  padding-left: 27px;
}
.sheet-tab {
  align-self: flex-start;
  width: 76px;
  height: 25px;
  margin-top: -1px;
  background: #fff;
  border-right: 1px solid #ababab;
  border-bottom: 2px solid #217346;
  color: #217346;
  font-size: 13px;
  line-height: 26px;
  font-weight: 500;
  text-align: center;
}
.add-sheet {
  margin-left: 33px;
}
.sheet-bar .dots {
  margin: 0 15px 0 auto;
}

/* Status bar */
.status-bar {
  flex: 0 0 21px;
  display: flex;
  align-items: center;
  padding: 0 9px 0 7px;
  background: #f1f1f1;
}
.status-bar > svg {
  margin-left: 20px;
}
.views {
  display: flex;
  align-self: stretch;
  margin-left: auto;
}
.views button {
  width: 38px;
  display: grid;
  place-items: center;
}
.views .on {
  background: #c8c8c8;
}
.zoom-step {
  margin: 0 4px;
}
.status-bar input {
  appearance: none;
  width: 100px;
  height: 12px;
  background: linear-gradient(#aaa, #aaa) center / 100% 1px no-repeat;
}
.status-bar input::-webkit-slider-thumb {
  appearance: none;
  width: 4px;
  height: 12px;
  background: #666;
}
.zoom-value {
  margin-left: 13px;
}
```
